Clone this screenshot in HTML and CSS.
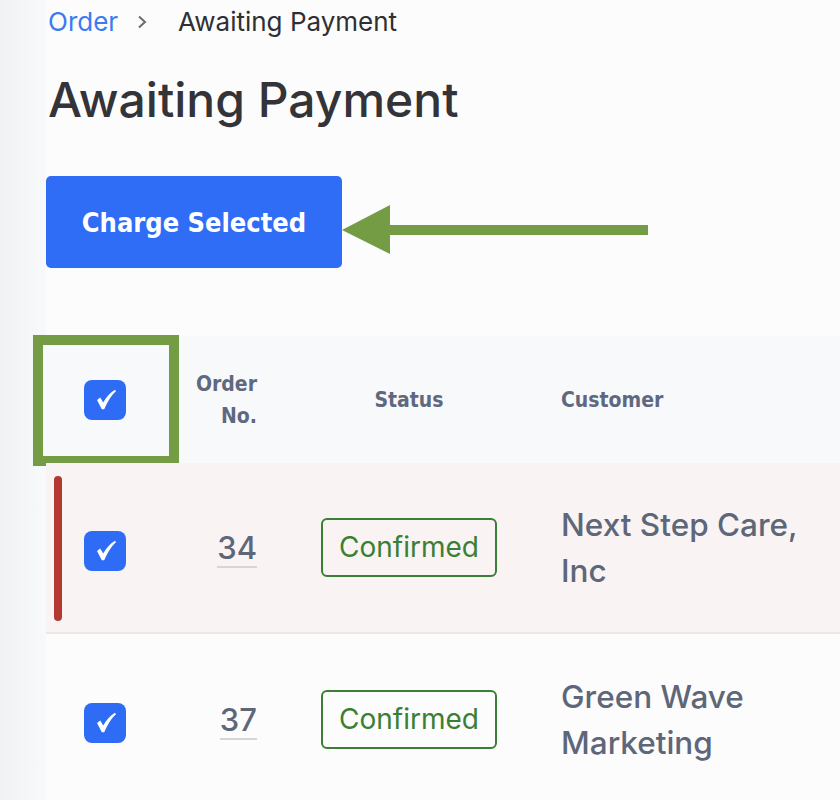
FILE: index.html
```html
<!DOCTYPE html>
<html lang="en">
<head>
<meta charset="utf-8">
<title>Awaiting Payment</title>
<link rel="stylesheet" href="styles.css">
</head>
<body>
<div class="page">
  <aside class="gutter"></aside>
  <main class="main">
    <nav class="crumbs">
      <a class="crumb-link" href="#">Order</a>
      <svg class="crumb-sep" width="10" height="14" viewBox="0 0 10 14"><polyline points="2,1.5 8,7 2,12.5" fill="none" stroke="#6b6b70" stroke-width="2"/></svg>
      <span class="crumb-current">Awaiting Payment</span>
    </nav>
    <h1 class="title">Awaiting Payment</h1>
    <div class="actions">
      <button class="btn-primary">Charge Selected</button>
      <svg class="arrow" width="310" height="50" viewBox="0 0 310 50">
        <polygon points="0,25 48,0 48,49" fill="#739c44"/>
        <rect x="46" y="20" width="260" height="10" fill="#739c44"/>
      </svg>
    </div>
    <div class="table">
      <div class="row head">
        <div class="cell c-check">
          <span class="checkbox"><svg class="tick" width="42" height="40" viewBox="0 0 42 40"><path d="M13,20 L16.2,17.6 L19.2,22.6 C22.2,17 26,13 31,9.8 L32,11.2 C27.6,15 23.6,21.5 20.2,29.2 L17.8,29.2 Z" fill="#fff"/></svg></span>
          <span class="highlight"></span>
        </div>
        <div class="cell c-num">Order<br>No.</div>
        <div class="cell c-status">Status</div>
        <div class="cell c-cust">Customer</div>
      </div>
      <div class="row body flagged">
        <span class="flag"></span>
        <div class="cell c-check"><span class="checkbox"><svg class="tick" width="42" height="40" viewBox="0 0 42 40"><path d="M13,20 L16.2,17.6 L19.2,22.6 C22.2,17 26,13 31,9.8 L32,11.2 C27.6,15 23.6,21.5 20.2,29.2 L17.8,29.2 Z" fill="#fff"/></svg></span></div>
        <div class="cell c-num"><span class="num">34</span></div>
        <div class="cell c-status"><span class="badge">Confirmed</span></div>
        <div class="cell c-cust">Next Step Care,<br>Inc</div>
      </div>
      <div class="row body">
        <div class="cell c-check"><span class="checkbox"><svg class="tick" width="42" height="40" viewBox="0 0 42 40"><path d="M13,20 L16.2,17.6 L19.2,22.6 C22.2,17 26,13 31,9.8 L32,11.2 C27.6,15 23.6,21.5 20.2,29.2 L17.8,29.2 Z" fill="#fff"/></svg></span></div>
        <div class="cell c-num"><span class="num">37</span></div>
        <div class="cell c-status"><span class="badge">Confirmed</span></div>
        <div class="cell c-cust">Green Wave<br>Marketing</div>
      </div>
    </div>
  </main>
</div>
</body>
</html>
```
FILE: styles.css
```css
* { box-sizing: border-box; }
html, body { margin: 0; padding: 0; }
body {
  background: #fcfcfc;
  font-family: Inter, "Noto Sans", sans-serif;
  overflow: hidden;
}
.page {
  display: flex;
  min-height: 800px;
}
.gutter {
  width: 46px;
  flex: none;
  background: linear-gradient(to right, #f1f2f4, #f8f9fa);
}
.main {
  flex: 1;
  min-width: 0;
}
.crumbs {
  display: flex;
  align-items: center;
  height: 44px;
  padding-left: 2px;
  font-size: 26px;
  line-height: 30px;
}
.crumb-link {
  color: #3a7cef;
  text-decoration: none;
}
.crumb-sep {
  margin: 0 31px 0 19px;
}
.crumb-current {
  color: #2f2f34;
}
.title {
  margin: 28px 0 0 2px;
  font-size: 48px;
  line-height: 56px;
  font-weight: 500;
  color: #333338;
}
.actions {
  position: relative;
  margin-top: 48px;
  height: 92px;
}
.btn-primary {
  width: 296px;
  height: 92px;
  border: none;
  border-radius: 5px;
  background: #306df6;
  color: #fff;
  font-family: "DejaVu Sans Condensed", "DejaVu Sans", sans-serif;
  font-stretch: condensed;
  font-weight: bold;
  font-size: 27px;
  padding: 0;
}
.arrow {
  position: absolute;
  left: 296px;
  top: 29px;
}
.table {
  margin-top: 68px;
}
.row {
  display: grid;
  grid-template-columns: 118px 111px 268px 1fr;
  align-items: center;
  position: relative;
}
.row.head {
  height: 127px;
  background: #f8f9fa;
  color: #5f6880;
  font-family: "DejaVu Sans Condensed", "DejaVu Sans", sans-serif;
  font-stretch: condensed;
  font-weight: bold;
  font-size: 21px;
  line-height: 32px;
}
.row.body {
  height: 171px;
  color: #5e6679;
  font-size: 31px;
  font-weight: 500;
  line-height: 46px;
}
.row.flagged {
  background: #f9f3f3;
  border-bottom: 2px solid #ebe8e9;
}
.flag {
  position: absolute;
  left: 8px;
  top: 13px;
  bottom: 11px;
  width: 8px;
  border-radius: 4px;
  background: #b43732;
}
.cell { position: relative; }
.c-check {
  display: flex;
  justify-content: center;
  align-items: center;
  align-self: stretch;
}
.checkbox {
  width: 42px;
  height: 40px;
  border-radius: 8px;
  background: #2f6cf6;
  display: block;
}
.row.body .checkbox {
  margin-top: 6px;
}
.tick {
  display: block;
}
.highlight {
  position: absolute;
  left: -13px;
  top: -1px;
  width: 146px;
  height: 131px;
  border: 10px solid #739c44;
}
.c-num {
  text-align: right;
  padding-right: 18px;
}
.num {
  display: inline-block;
  font-size: 31px;
  line-height: 36px;
  border-bottom: 2px solid #d6d6d9;
  padding-bottom: 0;
}
.c-status {
  text-align: center;
}
.badge {
  display: inline-block;
  width: 176px;
  height: 59px;
  border: 2px solid #3b7e35;
  border-radius: 6px;
  color: #3b7f33;
  font-size: 28px;
  font-weight: 400;
  line-height: 55px;
}
.c-cust {
  padding-left: 18px;
  white-space: nowrap;
}
.row.body .c-cust {
  font-size: 31.5px;
}
```
